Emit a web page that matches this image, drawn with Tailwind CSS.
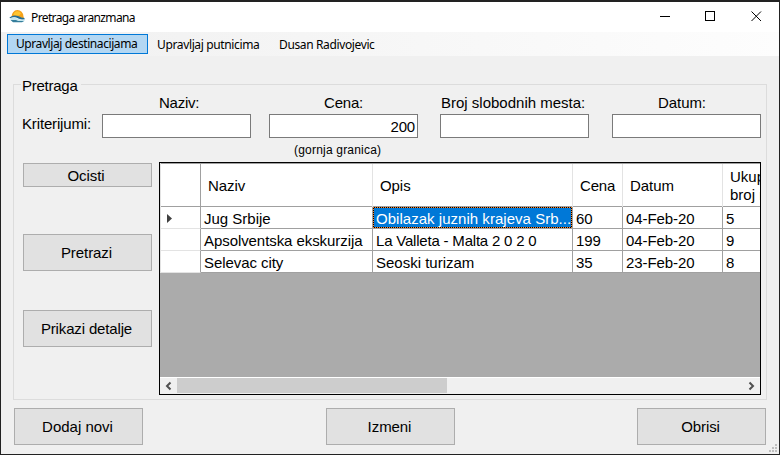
<!DOCTYPE html>
<html lang="sr-Latn">
<head>
<meta charset="utf-8">
<title>Pretraga aranzmana</title>
<script src="https://cdn.jsdelivr.net/npm/@tailwindcss/browser@4"></script>
</head>
<body class="w-[780px] h-[455px] overflow-hidden">
<div class="w-[780px] h-[455px] flex flex-col bg-[#f0f0f0] border border-t-2 border-[#222222] text-black text-[15px] leading-[17px] tracking-[-0.07px] whitespace-nowrap font-['Liberation_Sans',Arial,sans-serif]">

  <!-- Title bar -->
  <header class="h-[30px] shrink-0 bg-white flex items-center pl-2 font-['Noto_Sans','Open_Sans',sans-serif] text-[12px]">
    <svg class="w-4 h-4" viewBox="0 0 16 16">
      <path d="M2.500 8A5.800 6.500 0 0 1 14.500 7.500L15 9.500 9 8 3 8Z" fill="#f5a21b"/>
      <path d="M4.500 5.500A4 4 0 0 1 12 4.500L10 6.500 5 6.500Z" fill="#ffc52e"/>
      <path d="M.3 9C2 6.500 6 5.700 9 7S13 9 15.500 9V10.500C11 11.500 8 8 5 8.300S2 9.500.3 9Z" fill="#276d91"/>
      <path d="M.5 10C4 7.800 6 8.300 8 9.500S12 11 15.500 10.300V12C14.500 13 11 13 8.500 12.500S4 12 .5 10Z" fill="#c4e6ee"/>
      <path d="M1.500 11H7L9 12H15L13 13.300H4Z" fill="#347d9b"/>
    </svg>
    <span class="ml-[6px] tracking-[-0.62px]">Pretraga aranzmana</span>
    <div class="ml-auto flex items-center gap-[35px] pr-[17px] -mt-px">
      <svg class="w-[11px] h-[11px]" viewBox="0 0 11 11"><path d="M.5 5.500h10" stroke="#000" fill="none" shape-rendering="crispEdges"/></svg>
      <svg class="w-[11px] h-[11px]" viewBox="0 0 11 11"><rect x=".5" y=".5" width="9" height="9" stroke="#000" fill="none"/></svg>
      <svg class="w-[11px] h-[11px]" viewBox="0 0 11 11"><path d="M.5.5l9.500 9.500M10 .5l-9.500 9.500" stroke="#000" fill="none"/></svg>
    </div>
  </header>

  <!-- Menu -->
  <nav class="h-6 shrink-0 bg-linear-to-r from-[#f0f0f0] to-[#fdfdfd] flex items-center pl-[6px] font-['Noto_Sans','Open_Sans',sans-serif] text-[12px]">
    <span class="w-[141px] h-5 leading-[18px] pl-2 bg-[#b3d7f3] border border-[#0078d7] tracking-[-0.42px]">Upravljaj destinacijama</span>
    <span class="ml-[9px] w-[122px] tracking-[-0.36px]">Upravljaj putnicima</span>
    <span class="tracking-[-0.37px]">Dusan Radivojevic</span>
  </nav>

  <main class="flex flex-col pl-3 pt-[19px]">
    <fieldset class="w-[754px] h-[325px] border border-[#dcdcdc] pl-[9px] pr-[5px]">
      <legend class="-ml-[2px] pl-px pr-[3px] h-[19px] leading-[21px] tracking-[-0.25px]">Pretraga</legend>

      <div class="flex h-[68px]">
        <div class="w-[79px] -ml-px mr-px pt-[21px] tracking-[-0.15px]">Kriterijumi:</div>
        <label class="w-[149px] flex flex-col"><span class="pl-[57px] h-[20px] tracking-[-0.25px]">Naziv:</span><span class="h-6 bg-white border border-[#7a7a7a]"></span></label>
        <label class="ml-[18px] w-[149px] flex flex-col"><span class="pl-[55px] h-[20px] tracking-[-0.2px]">Cena:</span><span class="h-6 bg-white border border-[#7a7a7a] text-right pr-[2px] leading-[24px] tracking-[-0.2px]">200</span><span class="pl-[25px] text-[12px] leading-[24px] tracking-[0.2px]">(gornja granica)</span></label>
        <label class="ml-[22px] w-[149px] flex flex-col"><span class="pl-px h-[20px] tracking-normal">Broj slobodnih mesta:</span><span class="h-6 bg-white border border-[#7a7a7a]"></span></label>
        <label class="ml-[23px] w-[149px] flex flex-col"><span class="pl-[46px] h-[20px]">Datum:</span><span class="h-6 bg-white border border-[#7a7a7a]"></span></label>
      </div>

      <div class="flex">
        <div class="w-[129px] pt-px flex flex-col">
          <button class="h-6 bg-[#e1e1e1] border border-[#adadad] pt-px pr-[3px]">Ocisti</button>
          <button class="mt-[47px] h-[37px] bg-[#e1e1e1] border border-[#adadad] pr-[2px]">Pretrazi</button>
          <button class="mt-[39px] h-[37px] bg-[#e1e1e1] border border-[#adadad] tracking-[-0.15px] pr-[2px]">Prikazi detalje</button>
        </div>

        <!-- Data grid -->
        <div class="ml-[7px] w-[602px] h-[233px] border border-black bg-[#ababab] flex flex-col overflow-hidden">
          <div class="grid grid-cols-[41px_172px_200px_50px_100px_37px] border-l border-[#e3e3e3] -mr-px">
            <div class="col-span-6 grid grid-cols-subgrid h-11 bg-white border-t border-t-[#a0a0a0] border-b border-b-[#a0a0a0] *:border-r *:border-[#e3e3e3] *:pl-[7px] leading-[43px]">
              <div class="-ml-px mr-px border-r-[#a0a0a0]!"></div>
              <div class="-ml-px mr-px">Naziv</div>
              <div class="-ml-px mr-px">Opis</div>
              <div class="-ml-px mr-px tracking-[-0.15px]">Cena</div>
              <div class="-ml-px mr-px">Datum</div>
              <div class="-ml-px border-r-0! leading-[18px] pt-[4px] overflow-hidden tracking-normal">Ukupan<br>broj mesta</div>
            </div>
            <div class="col-span-6 grid grid-cols-subgrid h-[22px] bg-white leading-[24px] *:-ml-px *:mr-px *:border-r *:border-b *:border-[#a0a0a0] *:pl-[3px] *:overflow-hidden">
              <div class="border-b-[#e3e3e3]! flex items-center pl-[7px]!"><svg class="w-[5px] h-[9px] mt-[2px]" viewBox="0 0 5 9"><path d="M0 0L5 4.500 0 9Z" fill="#404040"/></svg></div>
              <div class="tracking-normal">Jug Srbije</div>
              <div class="relative bg-[#0078d7] text-white tracking-[0.03px]">Obilazak juznih krajeva Srb...<span class="absolute inset-0 border border-black"></span><span class="absolute inset-0 border border-dotted border-[#ff8728]"></span></div>
              <div>60</div><div>04-Feb-20</div><div class="border-r-0! mr-0!">5</div>
            </div>
            <div class="col-span-6 grid grid-cols-subgrid h-[22px] bg-white leading-[24px] *:-ml-px *:mr-px *:border-r *:border-b *:border-[#a0a0a0] *:pl-[3px] *:overflow-hidden">
              <div class="border-b-[#e3e3e3]!"></div>
              <div>Apsolventska ekskurzija</div><div class="tracking-[-0.2px]">La Valleta - Malta 2 0 2 0</div>
              <div>199</div><div>04-Feb-20</div><div class="border-r-0! mr-0!">9</div>
            </div>
            <div class="col-span-6 grid grid-cols-subgrid h-[22px] bg-white leading-[24px] *:-ml-px *:mr-px *:border-r *:border-b *:border-[#a0a0a0] *:pl-[3px] *:overflow-hidden">
              <div class="border-b-[#e3e3e3]!"></div>
              <div>Selevac city</div><div class="tracking-normal">Seoski turizam</div>
              <div>35</div><div>23-Feb-20</div><div class="border-r-0! mr-0!">8</div>
            </div>
          </div>
          <!-- Horizontal scrollbar -->
          <div class="mt-auto h-[17px] bg-[#f0f0f0] border-t border-white flex items-center">
            <svg class="w-[17px] h-4" viewBox="0 0 17 16"><path d="M10.500 4.500L7 8l3.500 3.500" stroke="#505050" stroke-width="2" fill="none"/></svg>
            <span class="w-[270px] h-[15px] mb-px bg-[#cdcdcd]"></span>
            <svg class="w-[17px] h-4 ml-auto" viewBox="0 0 17 16"><path d="M6.500 4.500L10 8l-3.500 3.500" stroke="#505050" stroke-width="2" fill="none"/></svg>
          </div>
        </div>
      </div>
    </fieldset>

    <!-- Actions -->
    <div class="flex mt-2 pl-px">
      <button class="w-[129px] h-[37px] bg-[#e1e1e1] border border-[#adadad] tracking-normal pr-[2px]">Dodaj novi</button>
      <button class="ml-[183px] w-[129px] h-[37px] bg-[#e1e1e1] border border-[#adadad] pr-[2px]">Izmeni</button>
      <button class="ml-[182px] w-[129px] h-[37px] bg-[#e1e1e1] border border-[#adadad] pr-[2px]">Obrisi</button>
      <svg class="w-2 h-2 ml-[3px] mt-[36px] shrink-0" viewBox="0 0 8 8" fill="#bfbfbf" shape-rendering="crispEdges"><path d="M6 0h2v2h-2zM3 3h2v2h-2zM6 3h2v2h-2zM0 6h2v2h-2zM3 6h2v2h-2zM6 6h2v2h-2z"/></svg>
    </div>
  </main>
</div>
</body>
</html>
